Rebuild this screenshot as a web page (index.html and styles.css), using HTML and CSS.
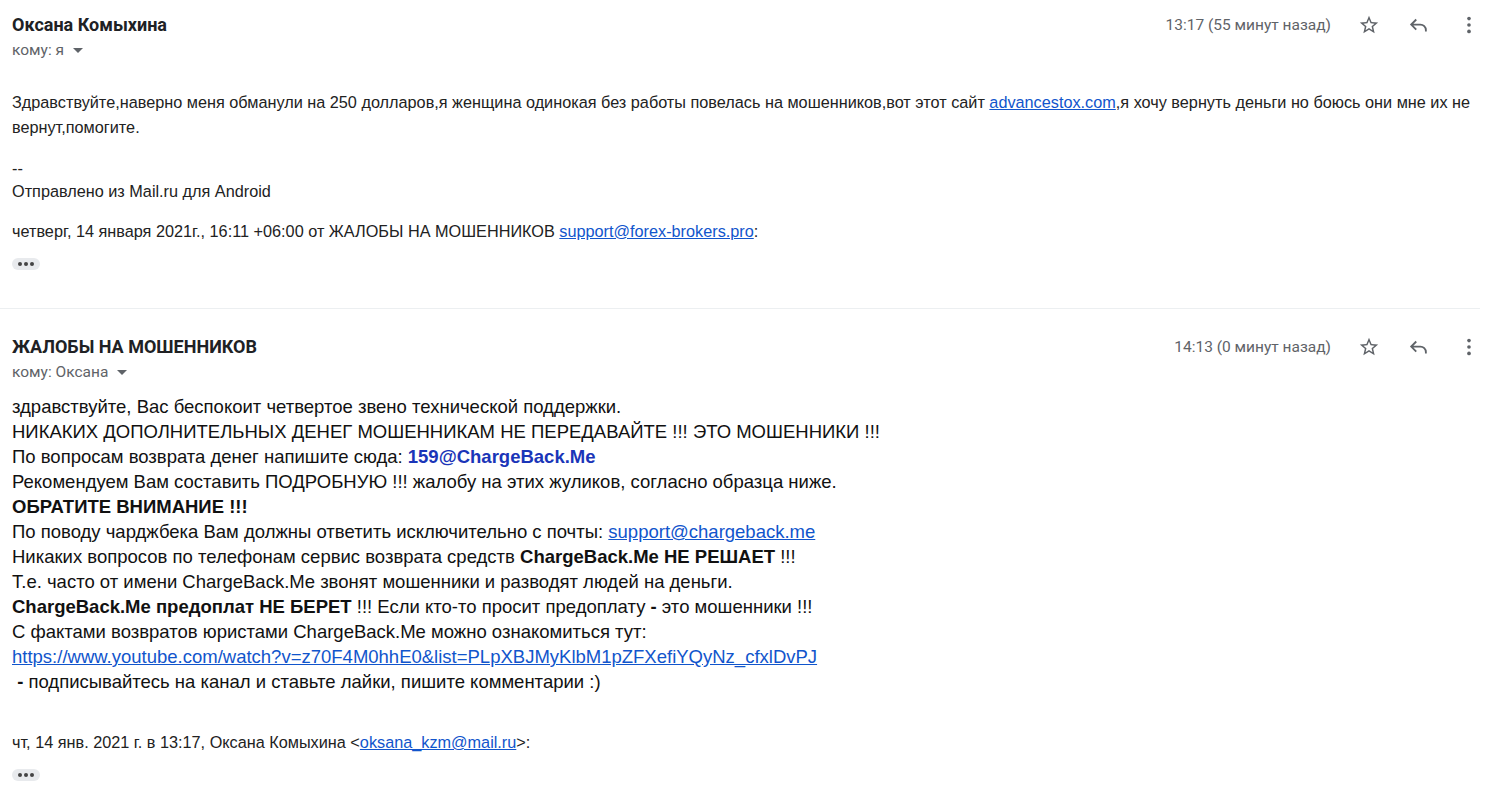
FILE: index.html
```html
<!DOCTYPE html>
<html lang="ru">
<head>
  <meta charset="UTF-8">
  <title>Письмо</title>
  <link rel="stylesheet" href="styles.css">
</head>
<body>
  <div class="thread">
    <div class="message">
      <div class="msg-header">
        <div class="sender">
          <div class="sender-name">Оксана Комыхина</div>
          <div class="recipient">кому: я <span class="caret"></span></div>
        </div>
        <div class="msg-meta">
          <span class="msg-time">13:17 (55 минут назад)</span>
          <span class="icon-btn">
            <svg width="22" height="22" viewBox="0 0 24 24"><path fill="#5f6368" d="M22 9.24l-7.19-.62L12 2 9.19 8.63 2 9.24l5.46 4.73L5.82 21 12 17.27 18.18 21l-1.63-7.03L22 9.24zM12 15.4l-3.760 2.27 1-4.28-3.32-2.88 4.38-.38L12 6.1l1.71 4.04 4.38.38-3.32 2.88 1 4.28L12 15.4z"/></svg>
          </span>
          <span class="icon-btn">
            <svg width="22" height="22" viewBox="0 0 24 24"><path fill="none" stroke="#5f6368" stroke-width="2" d="M9 6L3.5 11.5 9 17M4 11.5h9.5a6 6 0 0 1 6 6v1.5"/></svg>
          </span>
          <span class="icon-btn">
            <svg width="22" height="22" viewBox="0 0 24 24"><circle cx="12" cy="5" r="2" fill="#5f6368"/><circle cx="12" cy="12" r="2" fill="#5f6368"/><circle cx="12" cy="19" r="2" fill="#5f6368"/></svg>
          </span>
        </div>
      </div>

      <div class="msg-body first-body">
        <p>Здравствуйте,наверно меня обманули на 250 долларов,я женщина одинокая без работы повелась на мошенников,вот этот сайт <a href="#">advancestox.com</a>,я хочу вернуть деньги но боюсь они мне их не вернут,помогите.</p>
        <p class="signature"><span class="dashes">--</span>Отправлено из Mail.ru для Android</p>
        <p class="quote-line">четверг, 14 января 2021г., 16:11 +06:00 от ЖАЛОБЫ НА МОШЕННИКОВ <a href="#">support@forex-brokers.pro</a>:</p>
        <div class="more-btn"><span></span><span></span><span></span></div>
      </div>
    </div>

    <div class="message">
      <div class="msg-header">
        <div class="sender">
          <div class="sender-name">ЖАЛОБЫ НА МОШЕННИКОВ</div>
          <div class="recipient">кому: Оксана <span class="caret"></span></div>
        </div>
        <div class="msg-meta">
          <span class="msg-time">14:13 (0 минут назад)</span>
          <span class="icon-btn">
            <svg width="22" height="22" viewBox="0 0 24 24"><path fill="#5f6368" d="M22 9.24l-7.19-.62L12 2 9.19 8.63 2 9.24l5.46 4.73L5.82 21 12 17.27 18.18 21l-1.63-7.03L22 9.24zM12 15.4l-3.76 2.27 1-4.28-3.32-2.88 4.38-.38L12 6.1l1.71 4.04 4.38.38-3.32 2.88 1 4.28L12 15.4z"/></svg>
          </span>
          <span class="icon-btn">
            <svg width="22" height="22" viewBox="0 0 24 24"><path fill="none" stroke="#5f6368" stroke-width="2" d="M9 6L3.5 11.5 9 17M4 11.5h9.5a6 6 0 0 1 6 6v1.5"/></svg>
          </span>
          <span class="icon-btn">
            <svg width="22" height="22" viewBox="0 0 24 24"><circle cx="12" cy="5" r="2" fill="#5f6368"/><circle cx="12" cy="12" r="2" fill="#5f6368"/><circle cx="12" cy="19" r="2" fill="#5f6368"/></svg>
          </span>
        </div>
      </div>

      <div class="msg-body second-body">
        <div class="reply-text">
          здравствуйте, Вас беспокоит четвертое звено технической поддержки.<br>
          НИКАКИХ ДОПОЛНИТЕЛЬНЫХ ДЕНЕГ МОШЕННИКАМ НЕ ПЕРЕДАВАЙТЕ !!! ЭТО МОШЕННИКИ !!!<br>
          По вопросам возврата денег напишите сюда: <b class="mail-strong">159@ChargeBack.Me</b><br>
          Рекомендуем Вам составить ПОДРОБНУЮ !!! жалобу на этих жуликов, согласно образца ниже.<br>
          <b>ОБРАТИТЕ ВНИМАНИЕ !!!</b><br>
          По поводу чарджбека Вам должны ответить исключительно с почты: <a href="#">support@chargeback.me</a><br>
          Никаких вопросов по телефонам сервис возврата средств <b>ChargeBack.Me НЕ РЕШАЕТ</b> !!!<br>
          Т.е. часто от имени ChargeBack.Me звонят мошенники и разводят людей на деньги.<br>
          <b>ChargeBack.Me предоплат НЕ БЕРЕТ</b> !!! Если кто-то просит предоплату <b>-</b> это мошенники !!!<br>
          С фактами возвратов юристами ChargeBack.Me можно ознакомиться тут:<br>
          <a href="#">https://www.youtube.com/watch?v=z70F4M0hhE0&amp;list=PLpXBJMyKlbM1pZFXefiYQyNz_cfxlDvPJ</a><br>
          &nbsp;<b>-</b> подписывайтесь на канал и ставьте лайки, пишите комментарии :)
        </div>
        <p class="quote-line quote-second">чт, 14 янв. 2021 г. в 13:17, Оксана Комыхина &lt;<a href="#">oksana_kzm@mail.ru</a>&gt;:</p>
        <div class="more-btn"><span></span><span></span><span></span></div>
      </div>
    </div>
  </div>
</body>
</html>
```

FILE: styles.css
```css
* {
  box-sizing: border-box;
  margin: 0;
  padding: 0;
}

body {
  background-color: #fff;
  font-family: 'Liberation Sans', Arial, sans-serif;
  color: #222;
}

.thread {
  width: 1494px;
}

.message {
  padding: 13px 0 0 12px;
}

.message + .message {
  border-top: 1px solid #eceff1;
  margin-top: 38px;
  margin-right: 14px;
  padding-top: 26px;
}

.message + .message .msg-header {
  margin-right: -14px;
}

.msg-header {
  display: flex;
  justify-content: space-between;
  align-items: flex-start;
}

.sender-name {
  font-family: Roboto, sans-serif;
  font-weight: bold;
  font-size: 18px;
  color: #202124;
  line-height: 24px;
}

.recipient {
  font-family: Roboto, sans-serif;
  font-size: 15.5px;
  color: #5f6368;
  line-height: 20px;
  margin-top: 3px;
}

.caret {
  display: inline-block;
  width: 0;
  height: 0;
  border-left: 5px solid transparent;
  border-right: 5px solid transparent;
  border-top: 5px solid #5f6368;
  margin-left: 5px;
  vertical-align: middle;
}

.msg-meta {
  display: flex;
  align-items: center;
  height: 24px;
}

.msg-time {
  font-family: Roboto, sans-serif;
  font-size: 15.5px;
  color: #5f6368;
  margin-right: 13px;
}

.icon-btn {
  width: 50px;
  height: 24px;
  display: flex;
  align-items: center;
  justify-content: center;
}

.msg-body {
  font-size: 16.25px;
  line-height: 25px;
}

.first-body {
  margin-top: 30px;
}

.msg-body a {
  color: #1155cc;
  text-decoration: underline;
}

.signature {
  margin-top: 17px;
}

.dashes {
  display: block;
  line-height: 22px;
}

.quote-line {
  margin-top: 15px;
  font-size: 16.25px;
}

.quote-line a {
  color: #1155cc;
}

.more-btn {
  display: flex;
  gap: 2px;
  align-items: center;
  justify-content: center;
  width: 28px;
  height: 12px;
  background-color: #e8eaed;
  border-radius: 6px;
  margin-top: 14px;
}

.more-btn span {
  width: 4px;
  height: 4px;
  border-radius: 50%;
  background-color: #444;
}

.second-body {
  margin-top: 12px;
}

.reply-text {
  font-size: 18.5px;
  color: #111;
}

.mail-strong {
  color: #1a35b8;
}

.quote-second {
  margin-top: 36px;
}
```
